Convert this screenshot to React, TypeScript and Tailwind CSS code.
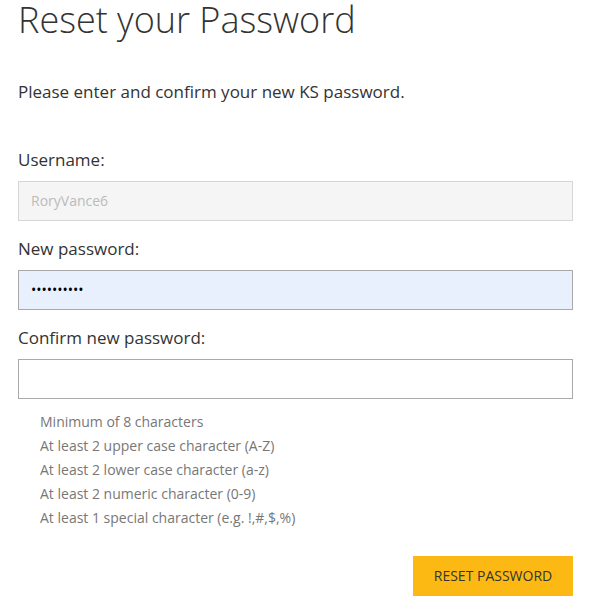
import React from 'react'

const hints = [
  'Minimum of 8 characters',
  'At least 2 upper case character (A-Z)',
  'At least 2 lower case character (a-z)',
  'At least 2 numeric character (0-9)',
  'At least 1 special character (e.g. !,#,$,%)',
]

const Field: React.FC<{ label: string; children: React.ReactNode }> = ({ label, children }) => (
  <div className="mb-4">
    <label className="block text-[17px] leading-6 text-[#333] mb-[9px]">{label}</label>
    {children}
  </div>
)

export default function App() {
  return (
    <div className="bg-white min-h-screen pl-[18px] pr-[29px] font-['Open_Sans',sans-serif] text-[#333]">
      <h1 className="text-[36px] leading-[1.1] font-light m-0">Reset your Password</h1>
      <p className="mt-10 text-[17px] leading-6 mb-11">Please enter and confirm your new KS password.</p>

      <form onSubmit={(e) => e.preventDefault()}>
        <Field label="Username:">
          <input
            type="text"
            disabled
            value="RoryVance6"
            readOnly
            className="block w-full h-10 px-3 text-sm bg-[#f5f5f5] border border-[#d6d6d6] text-[#bbb] outline-none"
          />
        </Field>
        <Field label="New password:">
          <input
            type="password"
            defaultValue="abcdefghij"
            className="block w-full h-10 px-3 text-sm bg-[#e8f0fe] border border-[#a9a9a9] text-black outline-none"
          />
        </Field>
        <div>
          <label className="block text-[17px] leading-6 text-[#333] mb-[9px]">Confirm new password:</label>
          <input
            type="password"
            className="block w-full h-10 px-3 text-sm bg-white border border-[#a9a9a9] outline-none"
          />
        </div>

        <ul className="mt-[11px] pl-[22px] text-sm leading-6 text-[#777]">
          {hints.map((h) => (
            <li key={h}>{h}</li>
          ))}
        </ul>

        <div className="flex justify-end mt-[26px]">
          <button
            type="submit"
            className="w-40 h-10 bg-[#fdb913] text-[#333] text-sm uppercase"
          >
            Reset Password
          </button>
        </div>
      </form>
    </div>
  )
}
